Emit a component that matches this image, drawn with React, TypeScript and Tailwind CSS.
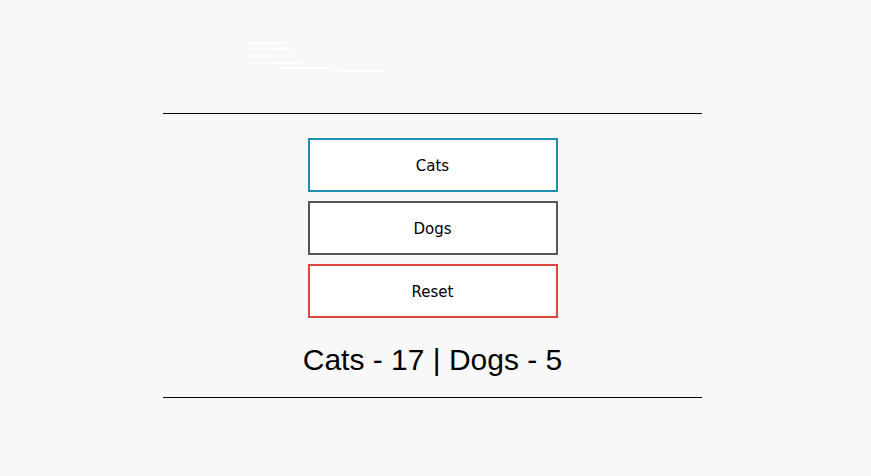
import React from "react";

export default function App() {
  return (
    <div className="min-h-screen w-full bg-[#f8f8f8]" style={{ fontFamily: "'Liberation Sans', Arial, sans-serif" }}>
      <div className="w-[865px]">
        <div className="h-[113px] w-full flex">
          <svg width="400" height="80" className="mt-[38px] ml-[240px]" viewBox="0 0 400 80">
            <g stroke="#ffffff" strokeWidth="2" strokeLinecap="round">
              <line x1="10" y1="5" x2="45" y2="5" />
              <line x1="12" y1="11" x2="50" y2="11" />
              <line x1="8" y1="18" x2="35" y2="18" />
              <line x1="15" y1="25" x2="60" y2="25" />
              <line x1="40" y1="30" x2="90" y2="30" />
              <line x1="100" y1="33" x2="145" y2="33" />
            </g>
          </svg>
        </div>
        <div className="w-[539px] mx-auto border-t border-black" />
        <div className="mt-[24px] flex flex-col items-center gap-[9px]">
          <button className="w-[250px] h-[54px] pt-[3px] bg-white border-2 border-[#1b8fb3] text-[15px] text-black" style={{ fontFamily: "'DejaVu Sans', sans-serif" }}>
            Cats
          </button>
          <button className="w-[250px] h-[54px] pt-[3px] bg-white border-2 border-[#555555] text-[15px] text-black" style={{ fontFamily: "'DejaVu Sans', sans-serif" }}>
            Dogs
          </button>
          <button className="w-[250px] h-[54px] pt-[3px] bg-white border-2 border-[#e0463d] text-[15px] text-black" style={{ fontFamily: "'DejaVu Sans', sans-serif" }}>
            Reset
          </button>
        </div>
        <div className="mt-[24px] h-[36px] leading-[36px] text-center text-[30px] text-black">
          Cats - 17 | Dogs - 5
        </div>
        <div className="mt-[19px] w-[539px] mx-auto border-t border-black" />
      </div>
    </div>
  );
}
